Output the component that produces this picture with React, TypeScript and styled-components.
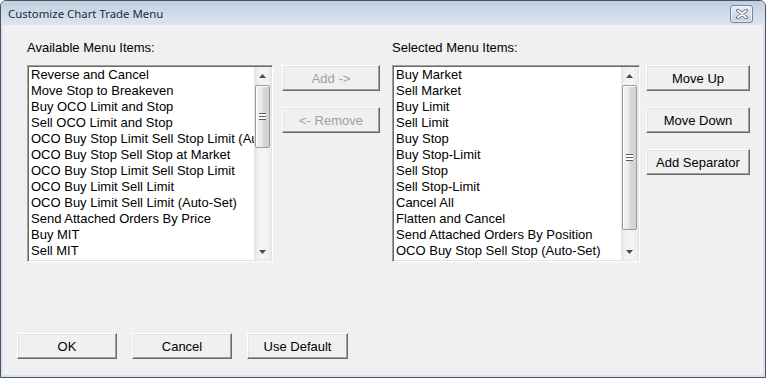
import React from "react";
import styled, { createGlobalStyle } from "styled-components";

const Global = createGlobalStyle`
  html, body { margin: 0; padding: 0; background: #ffffff; }
  body { font-family: "Liberation Sans", Arial, sans-serif; }
`;

const Window = styled.div`
  width: 766px;
  height: 378px;
  box-sizing: border-box;
  border: 1px solid #4b525c;
  border-radius: 6px 6px 0 0;
  background: #d9e3ef;
  display: flex;
  flex-direction: column;
  overflow: hidden;
`;

const TitleBar = styled.div`
  height: 24px;
  flex: none;
  display: flex;
  align-items: center;
  justify-content: space-between;
  padding: 0 12px 0 7px;
  background: linear-gradient(#bfcee0, #d3deeb 60%, #dbe5f1);
`;

const Title = styled.div`
  font-family: "Noto Sans", "Open Sans", sans-serif;
  font-size: 11.4px;
  color: #1f2a36;
`;

const CloseButton = styled.div`
  width: 21px;
  height: 16px;
  border: 1px solid #75839a;
  border-radius: 3px;
  margin-top: 2px;
  background: linear-gradient(#e8eef6, #d4deea 50%, #c6d3e2);
  box-shadow: inset 0 0 0 1px rgba(255, 255, 255, 0.6);
  display: flex;
  align-items: center;
  justify-content: center;
`;

const Client = styled.div`
  flex: 1;
  margin: 0 2px 2px 2px;
  background: #f0f0f0;
  display: flex;
  flex-direction: column;
`;

const TopSection = styled.div`
  display: flex;
  padding: 15px 0 0 24px;
`;

const Pane = styled.div<{ $width: number; $gap: number }>`
  width: ${(p) => p.$width}px;
  margin-left: ${(p) => p.$gap}px;
  display: flex;
  flex-direction: column;
  flex: none;
`;

const Label = styled.div`
  font-size: 13px;
  line-height: 16px;
  height: 16px;
  color: #000;
  margin-bottom: 9px;
  white-space: nowrap;
`;

const ButtonColumn = styled.div<{ $width: number; $gap: number }>`
  width: ${(p) => p.$width}px;
  margin-left: ${(p) => p.$gap}px;
  padding-top: 25px;
  display: flex;
  flex-direction: column;
  gap: 16px;
  flex: none;
`;

const Button = styled.button<{ $width?: number }>`
  box-sizing: border-box;
  width: ${(p) => (p.$width ? `${p.$width}px` : "100%")};
  height: 26px;
  padding: 0;
  margin: 0;
  font-family: "Liberation Sans", Arial, sans-serif;
  font-size: 13px;
  color: #000;
  background: #f0f0f0;
  border: 1px solid;
  border-color: #ffffff #696969 #696969 #ffffff;
  box-shadow: inset -1px -1px 0 #a0a0a0, inset 1px 1px 0 #e3e3e3;
  cursor: default;
  &:disabled {
    color: #a0a0a0;
  }
`;

const ListBox = styled.div`
  height: 197px;
  box-sizing: border-box;
  border: 1px solid;
  border-color: #a0a0a0 #ffffff #ffffff #a0a0a0;
  box-shadow: inset 1px 1px 0 #696969, inset -1px -1px 0 #e3e3e3;
  padding: 1px 1px 1px 1px;
  display: flex;
  background: #fff;
`;

const Items = styled.div`
  flex: 1;
  min-width: 0;
  overflow: hidden;
  padding-left: 2px;
  background: #fff;
`;

const Item = styled.div`
  height: 16px;
  line-height: 16px;
  font-size: 13px;
  color: #000;
  white-space: nowrap;
  overflow: hidden;
`;

const ScrollBar = styled.div`
  width: 17px;
  flex: none;
  display: flex;
  flex-direction: column;
  background: linear-gradient(to right, #e4e4e4, #f2f2f2 30%, #f4f4f4 70%, #ebebeb);
`;

const ArrowButton = styled.div`
  height: 17px;
  flex: none;
  display: flex;
  align-items: center;
  justify-content: center;
`;

const Track = styled.div`
  flex: 1;
  padding: 1px 1px 0 1px;
`;

const Thumb = styled.div`
  box-sizing: border-box;
  border: 1px solid #9a9a9a;
  border-radius: 2px;
  background: linear-gradient(to right, #f4f4f4, #e9e9e9 45%, #d9d9d9 55%, #d0d0d0);
  box-shadow: inset 1px 1px 0 #ffffff;
  display: flex;
  align-items: center;
  justify-content: center;
`;

const Grip = styled.div`
  width: 7px;
  height: 7px;
  background: repeating-linear-gradient(
    to bottom,
    #5a5a5a 0px,
    #5a5a5a 1px,
    #ffffff 1px,
    #ffffff 3px
  );
`;

const BottomBar = styled.div`
  margin-top: auto;
  display: flex;
  gap: 15px;
  padding: 0 0 16px 14px;
`;

const Arrow = ({ up }: { up?: boolean }) => (
  <svg width="7" height="4" viewBox="0 0 7 4">
    <path d={up ? "M3.5 0 L7 4 L0 4 Z" : "M0 0 L7 0 L3.5 4 Z"} fill="#4d4d4d" />
  </svg>
);

const ListWithScroll = ({ items, thumb }: { items: string[]; thumb: number }) => (
  <ListBox>
    <Items>
      {items.map((t) => (
        <Item key={t}>{t}</Item>
      ))}
    </Items>
    <ScrollBar>
      <ArrowButton>
        <Arrow up />
      </ArrowButton>
      <Track>
        <Thumb style={{ height: thumb }}>
          <Grip />
        </Thumb>
      </Track>
      <ArrowButton>
        <Arrow />
      </ArrowButton>
    </ScrollBar>
  </ListBox>
);

const available = [
  "Reverse and Cancel",
  "Move Stop to Breakeven",
  "Buy OCO Limit and Stop",
  "Sell OCO Limit and Stop",
  "OCO Buy Stop Limit Sell Stop Limit (Auto-Set)",
  "OCO Buy Stop Sell Stop at Market",
  "OCO Buy Stop Limit Sell Stop Limit",
  "OCO Buy Limit Sell Limit",
  "OCO Buy Limit Sell Limit (Auto-Set)",
  "Send Attached Orders By Price",
  "Buy MIT",
  "Sell MIT",
];

const selected = [
  "Buy Market",
  "Sell Market",
  "Buy Limit",
  "Sell Limit",
  "Buy Stop",
  "Buy Stop-Limit",
  "Sell Stop",
  "Sell Stop-Limit",
  "Cancel All",
  "Flatten and Cancel",
  "Send Attached Orders By Position",
  "OCO Buy Stop Sell Stop (Auto-Set)",
];

export default function App() {
  return (
    <>
      <Global />
      <Window>
        <TitleBar>
          <Title>Customize Chart Trade Menu</Title>
          <CloseButton>
            <svg width="12" height="10" viewBox="0 0 12 10">
              <path d="M2 1.5 L10 8.5 M10 1.5 L2 8.5" stroke="#59636f" strokeWidth="3.6" strokeLinecap="round" />
              <path d="M2 1.5 L10 8.5 M10 1.5 L2 8.5" stroke="#ffffff" strokeWidth="1.8" strokeLinecap="round" />
            </svg>
          </CloseButton>
        </TitleBar>
        <Client>
          <TopSection>
            <Pane $width={246} $gap={0}>
              <Label>Available Menu Items:</Label>
              <ListWithScroll items={available} thumb={63} />
            </Pane>
            <ButtonColumn $width={98} $gap={9}>
              <Button disabled>Add -&gt;</Button>
              <Button disabled>&lt;- Remove</Button>
            </ButtonColumn>
            <Pane $width={248} $gap={12}>
              <Label>Selected Menu Items:</Label>
              <ListWithScroll items={selected} thumb={145} />
            </Pane>
            <ButtonColumn $width={104} $gap={6}>
              <Button>Move Up</Button>
              <Button>Move Down</Button>
              <Button>Add Separator</Button>
            </ButtonColumn>
          </TopSection>
          <BottomBar>
            <Button $width={100}>OK</Button>
            <Button $width={100}>Cancel</Button>
            <Button $width={101}>Use Default</Button>
          </BottomBar>
        </Client>
      </Window>
    </>
  );
}
